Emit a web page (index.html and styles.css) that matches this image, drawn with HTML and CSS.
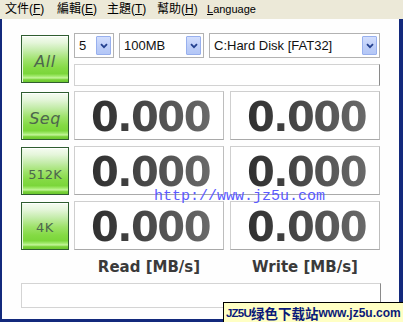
FILE: index.html
```html
<!DOCTYPE html>
<html>
<head>
<meta charset="utf-8">
<link rel="stylesheet" href="styles.css">
</head>
<body>
<div class="menubar">
  <span class="mi m1">文件(<u>F</u>)</span>
  <span class="mi">編輯(<u>E</u>)</span>
  <span class="mi">主題(<u>T</u>)</span>
  <span class="mi">幫助(<u>H</u>)</span>
  <span class="mi lang"><u>L</u>anguage</span>
</div>
<div class="frame">
  <div class="top">
    <div class="gbtn"><span class="glabel">All</span></div>
    <div class="topright">
      <div class="selects">
        <div class="sel s1"><span>5</span><i class="arr"><svg width="8" height="6" viewBox="0 0 8 6"><path d="M1 1.2 L4 4.2 L7 1.2" fill="none" stroke="#24418f" stroke-width="1.8"/></svg></i></div>
        <div class="sel s2"><span>100MB</span><i class="arr"><svg width="8" height="6" viewBox="0 0 8 6"><path d="M1 1.2 L4 4.2 L7 1.2" fill="none" stroke="#24418f" stroke-width="1.8"/></svg></i></div>
        <div class="sel s3"><span>C:Hard Disk [FAT32]</span><i class="arr"><svg width="8" height="6" viewBox="0 0 8 6"><path d="M1 1.2 L4 4.2 L7 1.2" fill="none" stroke="#24418f" stroke-width="1.8"/></svg></i></div>
      </div>
      <div class="bar"></div>
    </div>
  </div>
  <div class="rows">
    <div class="row">
      <div class="gbtn"><span class="glabel">Seq</span></div>
      <div class="box"><span class="num">0.000</span></div>
      <div class="box"><span class="num">0.000</span></div>
    </div>
    <div class="row">
      <div class="gbtn"><span class="glabel small">512K</span></div>
      <div class="box"><span class="num">0.000</span></div>
      <div class="box"><span class="num">0.000</span></div>
    </div>
    <div class="row">
      <div class="gbtn"><span class="glabel tiny">4K</span></div>
      <div class="box"><span class="num">0.000</span></div>
      <div class="box"><span class="num">0.000</span></div>
    </div>
  </div>
  <div class="labels">
    <span class="lbl">Read [MB/s]</span>
    <span class="lbl">Write [MB/s]</span>
  </div>
  <div class="status"></div>
</div>
<div class="url">http://www.jz5u.com</div>
<div class="wm"><span class="wm-a">JZ5U</span><span class="wm-b">绿色下载站</span><span class="wm-c">www.jz5u.com</span></div>
</body>
</html>
```
FILE: styles.css
```css
html, body {
  margin: 0;
  padding: 0;
  width: 403px;
  height: 322px;
  overflow: hidden;
  background: #fefefe;
}
body {
  position: relative;
  font-family: "Liberation Sans", "Noto Sans CJK TC", sans-serif;
}
.menubar {
  height: 19px;
  background: #ece9d8;
  display: flex;
  align-items: center;
  padding-left: 5px;
  font-size: 12px;
  color: #000;
}
.mi {
  width: 50px;
  font-family: "Liberation Sans", "Noto Sans CJK TC", sans-serif;
  white-space: nowrap;
  line-height: 19px;
}
.mi.m1 { width: 52px; }
.mi u { text-decoration: underline; text-underline-offset: 1px; }
.mi.lang { font-size: 11px; }
.frame {
  height: 303px;
  box-sizing: border-box;
  border-left: 2px solid #13297c;
  border-right: 4px solid #13297c;
  border-bottom: 3px solid #13297c;
  padding: 14px 0 0 19px;
  background: #fefefe;
}
.top {
  display: flex;
  align-items: flex-start;
}
.gbtn {
  width: 48px;
  height: 48px;
  box-sizing: border-box;
  border: 1px solid #2f5d30;
  background: linear-gradient(to bottom, #f6fcf2 0%, #e6f6dc 14%, #c4ecaa 32%, #9ee26a 52%, #84da44 70%, #7bd63a 82%, #a6ec72 88%, #c4f49a 91%, #78d238 95%, #6cc82e 100%);
  display: flex;
  align-items: center;
  justify-content: center;
  box-shadow: inset 0 1px 0 #ffffff, inset 1px 0 0 #e8f8e0;
  flex: none;
}
.top > .gbtn { margin-top: 2px; }
.glabel {
  font-family: "DejaVu Sans", sans-serif;
  font-style: italic;
  font-size: 16px;
  color: #4d664d;
  margin-top: 4px;
  letter-spacing: 0.5px;
}
.glabel.small { font-size: 13px; font-style: normal; letter-spacing: 0; margin-top: 6px; }
.glabel.tiny { font-size: 13px; font-style: normal; margin-top: 2px; }
.topright {
  margin-left: 5px;
  width: 306px;
}
.selects {
  display: flex;
  gap: 5px;
  height: 25px;
}
.sel {
  height: 25px;
  box-sizing: border-box;
  border: 1px solid #b2b2b2;
  background: #fff;
  display: flex;
  align-items: center;
  justify-content: space-between;
  padding: 0 2px 0 4px;
  font-size: 13px;
  color: #111;
}
.s1 { width: 40px; }
.s2 { width: 85px; }
.s3 { width: 171px; }
.arr {
  width: 15px;
  height: 19px;
  box-sizing: border-box;
  border: 1px solid #98b0ee;
  border-radius: 1px;
  background: linear-gradient(to bottom, #d2defd, #bccdf8 60%, #b4c7f6);
  display: flex;
  align-items: center;
  justify-content: center;
  margin-top: 0;
}
.bar {
  margin-top: 6px;
  height: 22px;
  box-sizing: border-box;
  border: 1px solid #d2d2d2;
  border-right-color: #8a8a8a;
  background: #fff;
}
.rows {
  margin-top: 5px;
  display: flex;
  flex-direction: column;
  gap: 6px;
}
.row {
  display: flex;
  align-items: flex-start;
  height: 49px;
}
.row .gbtn { margin-top: 1px; margin-right: 5px; }
.box {
  width: 150px;
  height: 49px;
  box-sizing: border-box;
  border: 1px solid #cfcfcf;
  border-right-color: #bdbdbd;
  border-bottom-color: #a9a9a9;
  background: #fff;
  text-align: center;
  padding-top: 3px;
  line-height: 44px;
}
.box + .box { margin-left: 6px; }
.num {
  display: inline-block;
  font-family: "DejaVu Sans", sans-serif;
  font-weight: bold;
  font-size: 40px;
  letter-spacing: -1.5px;
  padding-left: 3px;
  background: linear-gradient(90deg, #2e2e2e 0%, #444 40%, #6a6a6a 100%);
  -webkit-background-clip: text;
  background-clip: text;
  color: transparent;
}
.labels {
  margin-top: 8px;
  margin-left: 53px;
  display: flex;
  gap: 6px;
  height: 18px;
}
.lbl {
  width: 150px;
  text-align: center;
  font-family: "DejaVu Sans", sans-serif;
  font-weight: bold;
  font-size: 15px;
  line-height: 18px;
  color: #3a3a3a;
}
.status {
  margin-top: 7px;
  width: 360px;
  height: 25px;
  box-sizing: border-box;
  border: 1px solid #d4d4d4;
  border-right-color: #8a8a8a;
  background: #fff;
}
.url {
  position: absolute;
  left: 154px;
  top: 189px;
  font-family: "Liberation Mono", monospace;
  font-size: 15px;
  line-height: 15px;
  color: #5a5aff;
}
.wm {
  position: absolute;
  right: 0;
  bottom: 0;
  width: 180px;
  height: 20px;
  box-sizing: border-box;
  border: 1px solid #000;
  border-right: none;
  border-bottom: none;
  background: #ffffc4;
  display: flex;
  align-items: center;
  padding-left: 2px;
  color: #0a1a78;
  font-weight: bold;
  white-space: nowrap;
}
.wm-a {
  font-family: "Liberation Sans", sans-serif;
  font-size: 11.5px;
  letter-spacing: -0.8px;
}
.wm-b {
  font-family: "Noto Sans CJK SC", sans-serif;
  font-size: 13.5px;
  line-height: 18px;
}
.wm-c {
  font-family: "Liberation Sans", sans-serif;
  font-size: 12px;
}
```
